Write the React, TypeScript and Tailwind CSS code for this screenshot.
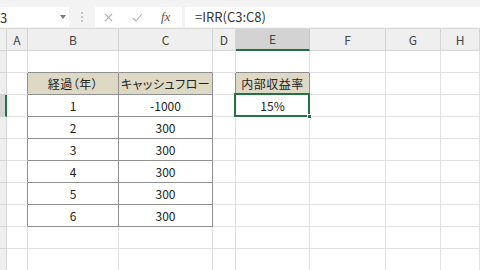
const COLS = [7, 21, 91, 94, 23, 74, 76, 55, 39];
const LETTERS = ['', 'A', 'B', 'C', 'D', 'E', 'F', 'G', 'H'];

type Cell = { text: string; head?: boolean };

const data: Record<string, Cell> = {
  '2-2': { text: '経過（年）', head: true },
  '2-3': { text: 'キャッシュフロー', head: true },
  '2-5': { text: '内部収益率', head: true },
  '3-2': { text: '1' },
  '3-3': { text: '-1000' },
  '3-5': { text: '15%' },
  '4-2': { text: '2' },
  '4-3': { text: '300' },
  '5-2': { text: '3' },
  '5-3': { text: '300' },
  '6-2': { text: '4' },
  '6-3': { text: '300' },
  '7-2': { text: '5' },
  '7-3': { text: '300' },
  '8-2': { text: '6' },
  '8-3': { text: '300' },
};

function darkRight(r: number, c: number) {
  if (r >= 2 && r <= 8 && c >= 1 && c <= 3) return true;
  if (r >= 2 && r <= 3 && (c === 4 || c === 5)) return true;
  return false;
}

function darkBottom(r: number, c: number) {
  if (r >= 1 && r <= 8 && (c === 2 || c === 3)) return true;
  if (r >= 1 && r <= 3 && c === 5) return true;
  return false;
}

function Toolbar() {
  return (
    <div className="h-[29px] bg-[#f3f3f3] border-b border-[#d9d9d9] flex items-start pt-[7px] box-border">
      <div className="w-[69px] h-[20px] bg-white relative overflow-hidden">
        <span className="absolute left-0 top-[1px] text-[13px] text-[#333]">3</span>
        <svg className="absolute left-[60px] top-[8px]" width="6" height="4" viewBox="0 0 6 4">
          <path d="M0 0 L6 0 L3 4 Z" fill="#7a7a7a" />
        </svg>
      </div>
      <div className="w-[26px] h-[20px] flex flex-col items-center justify-center gap-[2px]">
        <div className="w-[2px] h-[2px] bg-[#c4c4c4]" />
        <div className="w-[2px] h-[2px] bg-[#c4c4c4]" />
        <div className="w-[2px] h-[2px] bg-[#c4c4c4]" />
      </div>
      <div className="w-[87px] h-[20px] bg-white flex items-center">
        <svg className="ml-[9px]" width="9" height="9" viewBox="0 0 9 9">
          <path d="M1 1 L8 8 M8 1 L1 8" stroke="#b4b4b4" strokeWidth="1.1" />
        </svg>
        <svg className="ml-[19px]" width="11" height="9" viewBox="0 0 11 9">
          <path d="M1 5 L4 8 L10 1" stroke="#b4b4b4" strokeWidth="1.1" fill="none" />
        </svg>
        <span className="ml-[18px] text-[13px] italic text-[#555] font-['Liberation_Serif',serif]">fx</span>
      </div>
      <div className="ml-[3px] flex-1 h-[20px] bg-white flex items-center pl-[10px]">
        <span className="text-[13px] text-[#333]">=IRR(C3:C8)</span>
      </div>
    </div>
  );
}

function HeaderRow() {
  return (
    <div className="flex h-[22px]">
      {COLS.map((w, c) => {
        const sel = c === 5;
        return (
          <div
            key={c}
            style={{ width: w }}
            className={
              'shrink-0 box-border flex items-center justify-center text-[12px] text-[#444] ' +
              (sel
                ? 'bg-[#d3d3d3] border-b-2 border-b-[#217346] border-r border-r-[#c6c6c6]'
                : 'bg-[#efefef] border-b border-b-[#d4d4d4] border-r border-r-[#d4d4d4]')
            }
          >
            {LETTERS[c]}
          </div>
        );
      })}
    </div>
  );
}

function Row({ r }: { r: number }) {
  return (
    <div className="flex h-[22px]">
      {COLS.map((w, c) => {
        if (c === 0) {
          const sel = r === 3;
          return (
            <div
              key={c}
              style={{ width: w }}
              className={
                'shrink-0 box-border border-b border-b-[#d4d4d4] ' +
                (sel ? 'bg-[#d3d3d3] border-r-2 border-r-[#217346]' : 'bg-[#efefef] border-r border-r-[#d4d4d4]')
              }
            />
          );
        }
        const cell = data[`${r}-${c}`];
        const head = cell?.head;
        return (
          <div
            key={c}
            style={{ width: w }}
            className={
              'shrink-0 box-border border-r border-b flex items-center justify-center whitespace-nowrap text-[#222] ' +
              (darkRight(r, c) ? 'border-r-[#8f8f8f] ' : 'border-r-[#e1e1e1] ') +
              (darkBottom(r, c) ? 'border-b-[#8f8f8f] ' : 'border-b-[#e1e1e1] ') +
              (head ? "bg-[#ddd9c4] text-[12px] tracking-[0.5px] [font-feature-settings:'palt']" : 'bg-white text-[12px]')
            }
          >
            {cell?.text}
          </div>
        );
      })}
    </div>
  );
}

export default function App() {
  return (
    <div className="w-[480px] h-[270px] overflow-hidden bg-white relative font-['Noto_Sans_CJK_JP','Noto_Sans',sans-serif]">
      <Toolbar />
      <HeaderRow />
      {[1, 2, 3, 4, 5, 6, 7, 8, 9, 10].map((r) => (
        <Row key={r} r={r} />
      ))}
      <div className="absolute left-[234px] top-[93px] w-[76px] h-[24px] border-2 border-[#217346] pointer-events-none" />
      <div className="absolute left-[307px] top-[114px] w-[5px] h-[5px] bg-[#217346] border border-white" />
    </div>
  );
}
